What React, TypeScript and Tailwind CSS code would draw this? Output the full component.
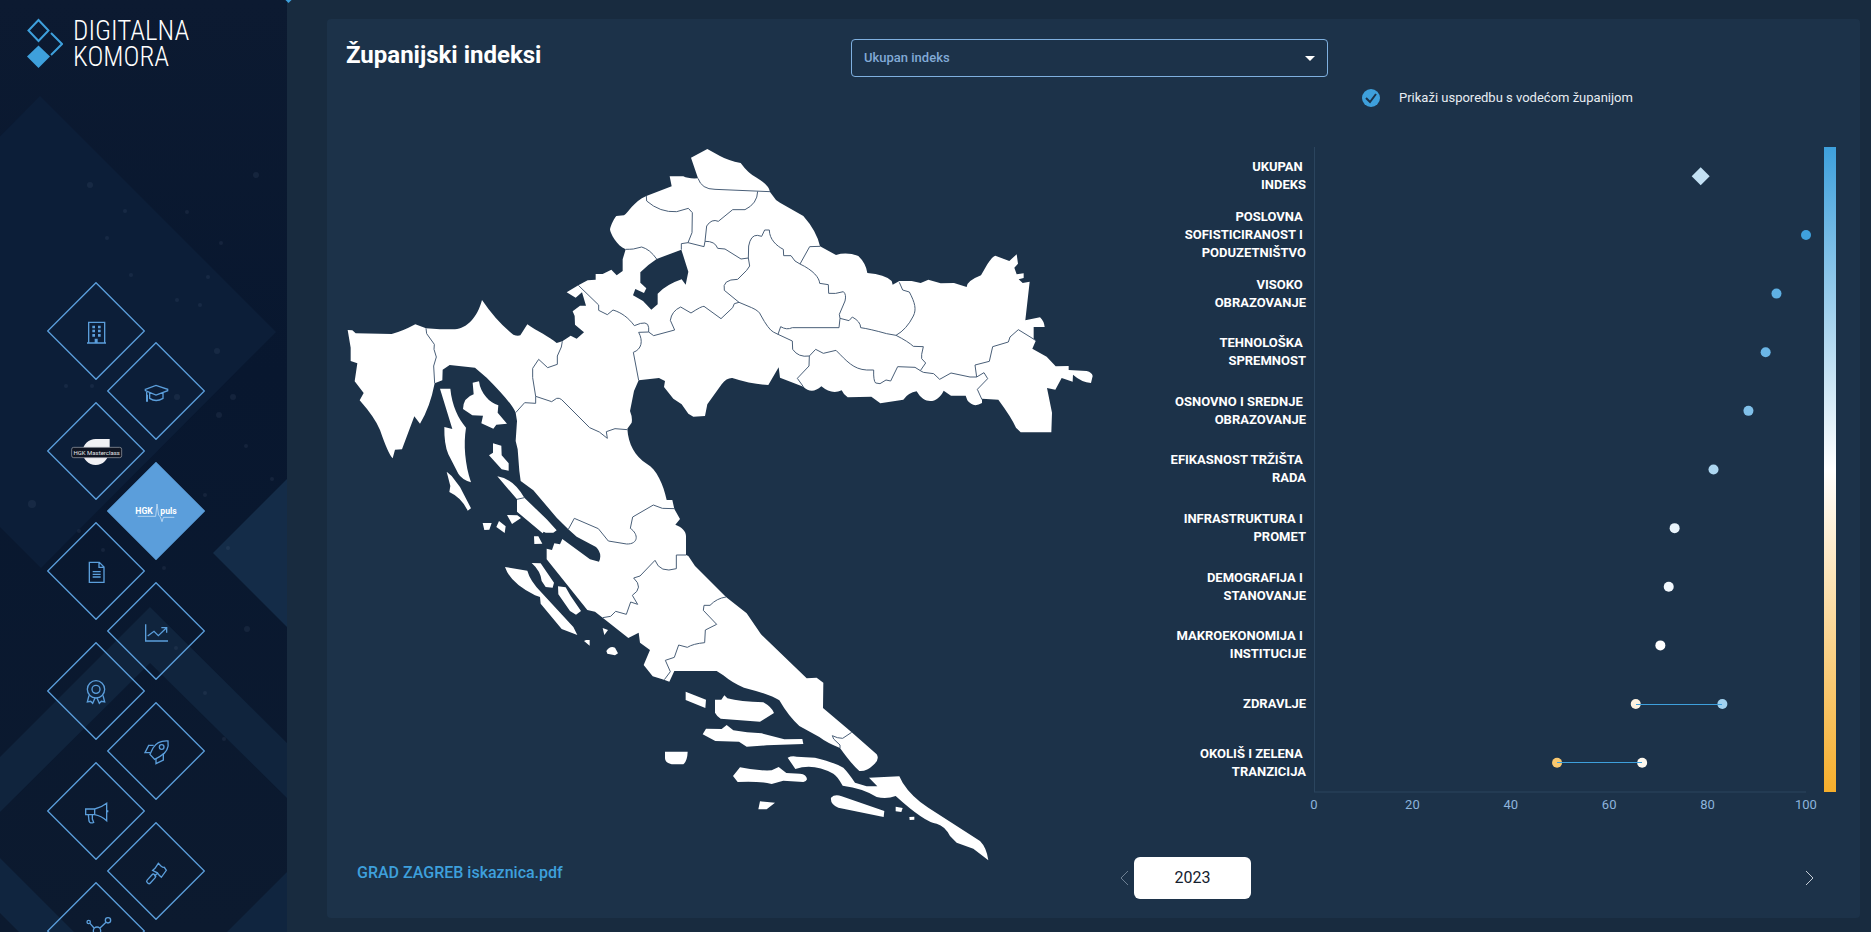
import React from "react";

type Row = {
  label: string[];
  value: number;
  color: string;
  lead?: number;
  leadColor?: string;
};

const rows: Row[] = [
  { label: ["UKUPAN", "INDEKS"], value: 78.6, color: "#c3e1f4" },
  { label: ["POSLOVNA", "SOFISTICIRANOST I", "PODUZETNIŠTVO"], value: 100, color: "#3fa1de" },
  { label: ["VISOKO", "OBRAZOVANJE"], value: 94, color: "#5fb0e3" },
  { label: ["TEHNOLOŠKA", "SPREMNOST"], value: 91.8, color: "#6bb6e6" },
  { label: ["OSNOVNO I SREDNJE", "OBRAZOVANJE"], value: 88.3, color: "#80c0e9" },
  { label: ["EFIKASNOST TRŽIŠTA", "RADA"], value: 81.2, color: "#add7f1" },
  { label: ["INFRASTRUKTURA I", "PROMET"], value: 73.3, color: "#e9f4fb" },
  { label: ["DEMOGRAFIJA I", "STANOVANJE"], value: 72.1, color: "#f2f8fd" },
  { label: ["MAKROEKONOMIJA I", "INSTITUCIJE"], value: 70.4, color: "#ffffff" },
  { label: ["ZDRAVLJE"], value: 65.4, color: "#fdf2e0", lead: 83, leadColor: "#a2d2ef" },
  { label: ["OKOLIŠ I ZELENA", "TRANZICIJA"], value: 49.4, color: "#f9c86f", lead: 66.7, leadColor: "#fef8ee" },
];

const ticks = [0, 20, 40, 60, 80, 100];

const stars = [
  [90, 185, 3], [125, 211, 2], [187, 212, 2], [107, 238, 2], [256, 175, 3], [221, 243, 2], [131, 275, 2],
  [208, 277, 2], [177, 300, 2], [200, 305, 2], [217, 351, 3], [66, 386, 2], [92, 386, 2], [177, 397, 3],
  [233, 397, 3], [219, 415, 3], [246, 446, 2], [32, 504, 4], [272, 479, 2], [205, 495, 2], [79, 531, 2],
  [228, 548, 2], [103, 550, 2], [164, 568, 2], [247, 629, 3], [176, 648, 2], [205, 693, 2], [224, 739, 2],
];

/* Sidebar icons share the 294 unit box of the diamond they sit in */
const icons: { name: string; art: React.ReactNode; active?: boolean }[] = [
  {
    name: "Tvrtke",
    art: (
      <>
        <path d="M125 183V121H173V183M120 183H177" />
        <path
          d="M136 131h8v8h-8zM153 131h8v8h-8zM136 143h8v8h-8zM153 143h8v8h-8zM136 156h8v8h-8zM153 156h8v8h-8zM143 170h9v13h-9z"
          fill="#5b9edb"
          stroke="none"
        />
      </>
    ),
  },
  {
    name: "Edukacija",
    art: (
      <path d="M115 142L147 130L182 142V146L147 159L115 146ZM128 151V169Q147 182 168 169V151M119 150V179M121 158V179" />
    ),
  },
  {
    name: "HGK Masterclass",
    art: (
      <>
        <path d="M188 111H147A39 39 0 1 0 185 150Q188 145 188 135Z" fill="#f1f1f4" stroke="none" />
        <rect x="74" y="136" width="150" height="31" rx="6" fill="#101522" stroke="#a5a9b1" strokeWidth="2" />
        <text x="149" y="158" textAnchor="middle" fontSize="18" fill="#e4e6ea" stroke="none">
          HGK Masterclass
        </text>
      </>
    ),
  },
  {
    name: "HGK puls",
    active: true,
    art: (
      <>
        <g fill="#ffffff" stroke="none" fontSize="26" fontWeight="700">
          <text x="85" y="156">HGK</text>
          <text x="160" y="156">puls</text>
        </g>
        <path d="M92 163H146L150 126L155 160L160 164L165 179L169 166H202" stroke="#e3effa" strokeWidth="2" />
      </>
    ),
  },
  {
    name: "Dokumenti",
    art: <path d="M127 121H157L171 135V181H127ZM156 121V136H171M137 149H161M137 157H161M137 165H161" />,
  },
  {
    name: "Statistika",
    art: <path d="M116 127V177H183M122 162L141 148L154 161L178 138M163 137H179V152" />,
  },
  {
    name: "Certifikati",
    art: (
      <>
        <circle cx="147" cy="142" r="26" />
        <circle cx="147" cy="142" r="12" />
        <path d="M126 160L121 180L131 178L137 184L144 168M168 160L173 180L163 178L157 184L150 168" />
      </>
    ),
  },
  {
    name: "Startup",
    art: (
      <>
        <path d="M183 117Q152 115 138 138L129 157L143 172L158 164Q188 148 183 117Z" />
        <circle cx="164" cy="135" r="7" />
        <path d="M140 130H125L114 152H129M147 170V185L169 174V154" />
      </>
    ),
  },
  {
    name: "Promocija",
    art: (
      <path d="M116 141H143V158H116ZM143 141Q163 137 179 124V176Q163 162 143 158M182 145V151M124 158L126 177Q129 186 140 181L136 171V158" />
    ),
  },
  {
    name: "Natječaji",
    art: (
      <>
        <path d="M154 124L161 131Q168 137 172 136L178 145L163 166L156 159Q152 151 146 150L137 145L144 139ZM151 154L142 163" />
        <rect x="117" y="164" width="32" height="13" rx="5" transform="rotate(-48 133 171)" />
      </>
    ),
  },
  {
    name: "Mreža",
    art: (
      <>
        <circle cx="125" cy="120" r="5" />
        <circle cx="183" cy="115" r="8" />
        <circle cx="150" cy="146" r="11" />
        <circle cx="121" cy="176" r="7" />
        <circle cx="176" cy="178" r="6" />
        <path d="M129 124L141 138M177 121L159 138M142 154L126 170M158 154L171 173" />
      </>
    ),
  },
];

const Sidebar = () => (
  <aside className="relative w-[287px] shrink-0 overflow-hidden bg-linear-to-b from-[#0c1a31] via-[#08172f] via-40% to-[#0c1a2f]">
    <svg className="absolute inset-0" width="287" height="1200" aria-hidden="true">
      <path d="M40 96L276 332L41 568L-195 332Z" fill="#0c1e38" />
      <path d="M213 553L287 479V627Z" fill="#142c48" />
      <path d="M150 607L287 743V798L150 663L0 812V757Z" fill="#10243d" />
      <path d="M0 858L150 1008V1063L0 913ZM287 872L137 1022H287Z" fill="#10253f" />
      {stars.map(([x, y, r]) => (
        <circle key={`${x}-${y}`} cx={x} cy={y} r={r} fill="#7c97b3" opacity="0.1" />
      ))}
    </svg>

    <a href="#" className="relative flex h-[282px] items-start gap-[10px] pt-[18px] pl-[27px]">
      <svg width="36" height="52" viewBox="0 0 36 52" fill="none" stroke="#3ea0dc" strokeWidth="2" aria-hidden="true">
        <path d="M11.500 2L21.500 12.500L11.500 23L1.500 12.500Z" />
        <path d="M24 15L35 26L24 37" />
        <path d="M11.500 27.500L23 38.500L11.500 50L0 38.500Z" fill="#3ea0dc" stroke="none" />
      </svg>
      <span className="font-['Roboto_Condensed','Liberation_Sans_Narrow',Roboto,sans-serif] text-[27px] leading-[26px] font-light text-white">
        DIGITALNA
        <br />
        KOMORA
      </span>
    </a>

    <nav className="relative flex flex-col">
      {icons.map((icon, i) => (
        <a
          key={icon.name}
          href="#"
          aria-label={icon.name}
          className={i % 2 ? "-mb-[38px] ml-[107px] w-[98px]" : "-mb-[38px] ml-[47px] w-[98px]"}
        >
          <svg className="block" width="98" height="98" viewBox="0 0 294 294" fill="none" stroke="#5b9edb" strokeWidth="4">
            <path d="M147 2L292 147L147 292L2 147Z" fill={icon.active ? "#5b9edb" : "none"} />
            {icon.art}
          </svg>
        </a>
      ))}
    </nav>
  </aside>
);

const CroatiaMap = () => (
  <svg className="block h-auto w-full" viewBox="60 30 2280 2160" role="img" aria-label="Karta županija">
    <g fill="#ffffff">
      {/* mainland, with Grad Zagreb left open */}
      <path
        fillRule="evenodd"
        d="M83 597L97 598L107 607L215 609Q245 602 286 580L318 592L360 595H405C440 592 472 560 486 507Q530 572 580 611Q592 616 601 613L622 580C650 600 690 618 710 636L727 631L752 614L770 623L792 604L765 581L764 555L758 541L780 524H798L786 484L767 500L740 484L775 463L803 448L827 446V429H848L874 416L890 433L908 420V385L917 355C890 345 870 305 870 295C872 283 885 258 889 255L912 253C925 245 940 212 979 195L1055 166L1049 136H1090Q1105 144 1134 142L1113 80L1162 54L1200 75Q1225 89 1262 96Q1285 128 1310 140Q1348 163 1350 183L1368 207L1380 215L1450 255Q1490 300 1500 346L1548 372Q1580 362 1615 375Q1638 397 1642 426Q1695 430 1715 450L1718 461L1738 450H1775L1802 456L1825 446L1862 457L1902 456L1940 468Q1940 450 1983 433L2002 400Q2018 375 2026 374L2068 390L2090 370L2094 398L2083 410L2090 430L2111 427V441L2096 445L2108 456L2129 452L2116 568L2160 559Q2172 570 2174 588H2141V625L2147 630L2137 653L2180 677L2207 706L2246 705V717L2300 720Q2316 724 2318 735L2313 756Q2285 754 2259 731L2258 752L2225 741L2206 776L2181 771L2196 845L2194 904H2102L2088 890Q2075 860 2035 806L1986 803V816Q1960 832 1942 808L1937 794H1893L1871 779C1855 815 1815 825 1790 781Q1765 785 1750 806L1681 817L1654 797L1583 799Q1570 790 1565 778Q1535 792 1504 766Q1475 792 1450 767L1380 740L1376 709L1345 762Q1295 760 1237 741Q1220 740 1205 760L1162 820L1155 855L1120 857L1105 848L1085 820L1060 803L1032 768L1035 750L1017 741L956 748L942 780L930 840Q938 860 935 875L922 893C925 940 945 975 980 998C1010 1015 1030 1060 1040 1107H1057L1063 1134L1080 1164L1066 1181C1085 1188 1098 1200 1098 1215V1272L1105 1275L1125 1305L1218 1398L1280 1447L1323 1510L1460 1642L1490 1640L1510 1655L1509 1731L1595 1804L1670 1870Q1680 1885 1660 1902Q1640 1922 1618 1920Q1595 1900 1560 1851Q1520 1835 1498 1818L1438 1785Q1405 1755 1378 1708Q1350 1690 1272 1670Q1240 1658 1210 1633L1190 1620H1063L1048 1652L1032 1646L998 1636L971 1602L990 1557L960 1535L956 1505L925 1521L848 1460L825 1442L802 1437L680 1285V1253L696 1257L703 1237L720 1240L727 1224L810 1285L837 1292Q848 1268 828 1248L770 1217L745 1195L710 1160L640 1078L602 1050L598 1020L593 955L587 930L591 870L587 845Q575 815 500 740L465 710L389 702L368 716L367 748L344 757Q330 830 300 878L283 856L246 955L225 956L218 982Q205 970 180 897Q165 860 119 808L131 786L104 751L112 697L92 690V650ZM961 424Q985 400 1010 384L1084 356L1105 422L1097 461L1085 445Q1040 460 1013 488V520L994 536L969 510L939 493L946 474L972 486L979 472L961 455Z"
      />
      {/* Cres, Krk, Rab */}
      <path d="M360 773H391C396 825 415 862 438 890C430 940 435 1000 453 1054Q425 1045 415 1028L385 970Q372 940 373 888L397 894ZM458 755L477 751C482 790 510 815 535 823L533 845L561 878L529 881L520 893L484 877L489 854L457 853L429 834Q430 800 461 790ZM519 937L544 944L545 973L566 997V1019L545 1015L507 973L519 965Z" />
      <g transform="translate(180 750)">
        <path d="M200 272L215 285L240 318L273 382L263 389Q245 350 208 333L211 315ZM352 286Q400 292 433 350L500 415L530 448L520 455H497L491 452L488 457L411 392V355Z" />
        <path d="M308 426H335L328 446L313 447ZM357 420L377 436L374 456L349 438ZM381 402L412 403L423 411L396 429ZM462 466H475L487 488L463 489Z" />
        <path d="M375 558L442 569Q450 600 485 635L580 738L592 762L545 744L482 668L480 648L465 643Q390 605 375 558ZM455 546L482 547L522 605L518 620L497 618L485 600Q482 570 455 546ZM534 616L557 619L572 645L603 690L588 701L570 690L535 640Z" />
        <path d="M668 741L684 747L673 762ZM612 780L618 777H629V794ZM679 810Q690 793 705 800L714 817L705 823L682 818Z" />
      </g>
      <g transform="translate(840 990)">
        <path d="M257 692L318 716L316 741L257 717ZM345 716H364L373 703L382 712Q420 722 490 724Q515 738 522 756L480 782L362 773Q350 765 345 755ZM308 820L318 803L365 804L380 792L400 808Q440 815 485 817L553 835L607 834L610 849L500 853L440 857L417 842L346 840ZM195 872H263Q262 900 250 910H215Q195 905 195 892Z" />
        <path d="M399 945L420 919Q470 930 515 928L536 918L559 936L600 938Q620 940 621 955Q618 963 610 963L550 959L515 969Q480 960 413 963Z" />
        <path d="M563 890Q575 884 590 887L645 890Q700 903 730 920Q745 935 765 965L800 976H832L807 950L898 946L908 965Q935 1008 985 1040L1140 1140Q1160 1160 1165 1198L1120 1163L1070 1145L1050 1125Q1035 1095 1010 1088Q975 1085 887 1005Q860 1015 830 1008Q790 982 728 974Q712 945 700 938Q640 905 586 924Z" />
        <path d="M693 1010Q705 998 725 1006L853 1050L851 1068L715 1040Q690 1030 693 1010ZM480 1021L525 1025L500 1045H475ZM887 1037L908 1041L904 1053L887 1051ZM928 1068L943 1067V1076L929 1077Z" />
      </g>
    </g>
    <g fill="none" stroke="#4a5f78" strokeWidth="3" strokeLinejoin="round">
      <path d="M318 592L320 608L343 640L342 655L349 678L341 705L344 757M727 631L724 648L712 675V700L683 710L656 685L638 712V740L647 796V817L614 815L587 845" />
      <path d="M647 796L695 812L710 802Q718 800 725 806L809 890L838 903L862 922L859 902L885 893L922 896" />
      <path d="M775 463L836 522V538L862 551L879 537C905 545 925 560 943 584Q985 565 986 590V603L956 604C970 630 965 655 940 664L956 748M986 603L1001 614L1064 597L1051 568Q1055 540 1082 528L1113 546Q1145 525 1152 526L1203 563L1238 530L1243 518L1257 514" />
      <path d="M917 355Q930 355 940 354L965 348Q990 355 1010 384M979 195L980 210Q1020 245 1070 242L1105 232L1117 245L1116 305L1104 335L1084 338V356M1104 335L1152 347L1155 331L1160 285Q1175 262 1195 271L1238 236H1275Q1312 218 1313 181M1134 142Q1145 175 1185 175L1350 182" />
      <path d="M1155 331Q1185 330 1193 352L1215 354L1263 384L1285 381L1286 345Q1292 312 1312 313L1325 316L1334 297H1348C1348 325 1370 345 1390 355L1391 374H1413L1425 390L1440 399L1469 347L1500 346" />
      <path d="M1285 381L1289 405L1280 418L1253 445Q1205 445 1213 478L1257 514L1295 530Q1318 540 1322 552Q1345 595 1360 603L1374 610L1417 630L1418 655Q1435 680 1468 675L1487 655L1510 667L1548 658C1580 690 1600 715 1640 717H1661Q1660 750 1667 756L1680 758L1698 747L1712 750L1733 707L1785 709L1801 719L1817 696L1805 683V670L1810 647L1780 646Q1765 632 1728 613L1700 608Q1650 594 1622 590Q1622 572 1597 558L1587 569L1560 562L1557 590H1417Q1400 598 1382 587L1374 610" />
      <path d="M1440 399C1480 418 1498 440 1499 457L1525 461L1526 487Q1545 490 1570 482Q1580 490 1575 510L1558 550L1560 562M1738 454L1748 477L1768 483C1785 515 1790 535 1780 555Q1760 595 1728 613M1468 675L1467 705L1432 742L1450 767" />
      <path d="M1801 719L1810 724L1841 728L1859 745L1893 726L1950 738H1970L1992 725L2003 743L1972 775L1986 806M1970 738L1965 702L2008 691L2018 647L2065 633L2070 618L2095 596L2147 628" />
      <path d="M745 1195L763 1162L835 1193L865 1230L920 1239C955 1240 957 1210 931 1192L938 1158L1000 1122L1027 1132L1063 1133M1098 1272H1069V1313Q1020 1328 1005 1288L960 1335L941 1341Q972 1370 937 1393L953 1420L932 1413L919 1450L887 1441L872 1456L848 1460M591 1105L613 1100" />
      <path d="M1218 1398Q1190 1402 1170 1423H1152L1150 1438L1190 1480L1156 1497L1154 1535Q1120 1538 1102 1549L1076 1542L1063 1579L1036 1588L1051 1622L1033 1646M1595 1804L1568 1822L1552 1820L1537 1814L1541 1824L1560 1842V1851" />
    </g>
  </svg>
);

const Plot = () => (
  <svg className="block h-full w-full overflow-visible" role="img" aria-label="Vrijednosti indeksa">
    <path d="M0.500 0V645" stroke="#2b455e" />
    <line x1="0" y1="100%" x2="100%" y2="100%" stroke="#2b455e" />
    {rows.map((row, i) => {
      const y = `${((i + 0.5) / rows.length) * 100}%`;
      const x = `${row.value}%`;
      if (i === 0)
        return (
          <svg key={i} x={x} y={y} className="overflow-visible">
            <path d="M0 -9L9 0L0 9L-9 0Z" fill={row.color} />
          </svg>
        );
      return (
        <g key={i}>
          <circle cx={x} cy={y} r="5" fill={row.color} />
          {row.lead && (
            <>
              <circle cx={`${row.lead}%`} cy={y} r="5" fill={row.leadColor} />
              <line x1={x} y1={y} x2={`${row.lead}%`} y2={y} stroke="#3ea0dc" shapeRendering="crispEdges" />
            </>
          )}
        </g>
      );
    })}
  </svg>
);

const IndexChart = () => (
  <div className="flex pt-[6px] pr-6">
    <div className="grid h-[645px] w-[172px] shrink-0 grid-rows-11 text-right text-[13px] leading-[18px] font-bold">
      {rows.map((row) => (
        <div key={row.label[0]} className="flex flex-col justify-center whitespace-pre">
          {row.label.map((line, i) => (
            <span key={line}>{i < row.label.length - 1 ? `${line} ` : line}</span>
          ))}
        </div>
      ))}
    </div>
    <div className="ml-2 flex-1">
      <div className="h-[645px]">
        <Plot />
      </div>
      <div className="mt-1 flex justify-between text-[13px] leading-[18px] text-[#8db4dc]">
        {ticks.map((tick) => (
          <span key={tick} className="flex w-0 justify-center">
            {tick}
          </span>
        ))}
      </div>
    </div>
    <div className="ml-[18px] h-[645px] w-3 bg-linear-to-b/srgb from-[#3ea0dc] via-white to-[#f6ae2b]" />
  </div>
);

export default function App() {
  return (
    <div className="flex h-screen overflow-hidden bg-[#182b3f] font-[Roboto,'Liberation_Sans',sans-serif] text-white">
      <Sidebar />
      <main className="relative min-w-0 flex-1 pt-[19px] pr-[11px] pb-[14px] pl-10">
        <span className="absolute -top-[3px] -left-px size-[5px] rotate-45 bg-[#3ea0dc]" />
        <section className="flex h-full flex-col rounded bg-[#1c3249]">
          <header className="grid grid-cols-[524fr_477fr_532fr] pt-5">
            <h1 className="pl-[19px] text-2xl font-bold">Županijski indeksi</h1>
            <div className="relative h-[38px]">
              <select
                aria-label="Indeks"
                className="h-full w-full appearance-none rounded border border-[#7fb0df] px-3 text-[13px] font-medium text-[#82aad6]"
              >
                <option>Ukupan indeks</option>
              </select>
              <svg className="pointer-events-none absolute top-[17px] right-[13px]" width="10" height="5" aria-hidden="true">
                <path d="M0 0H10L5 5Z" fill="#ffffff" />
              </svg>
            </div>
            <label className="flex items-center gap-[19px] pt-[50px] pl-[34px] text-[13px] leading-[18px] text-[#e8edf2]">
              <span className="relative size-[18px]">
                <input type="checkbox" defaultChecked className="block size-[18px] appearance-none rounded-full bg-[#3ea0dc]" />
                <svg className="pointer-events-none absolute inset-0" width="18" height="18" fill="none" stroke="#1c3249" strokeWidth="2" aria-hidden="true">
                  <path d="M4 9L8 13L14 5" />
                </svg>
              </span>
              Prikaži usporedbu s vodećom županijom
            </label>
          </header>

          <div className="mt-[34px] grid grid-cols-[807fr_726fr]">
            <div className="pl-[13px]">
              <div className="pr-[34px]">
                <CroatiaMap />
              </div>
              <a href="#" className="ml-[17px] inline-block text-base leading-6 font-medium text-[#3ea0dc]">
                GRAD ZAGREB iskaznica.pdf
              </a>
            </div>
            <div>
              <IndexChart />
              <div className="mt-[43px] flex items-center pr-[46px]">
                <button type="button" aria-label="Prethodna godina" disabled className="-ml-[14px] pr-[5px] text-[#6d8093]">
                  <svg width="9" height="16" fill="none" stroke="currentColor" aria-hidden="true">
                    <path d="M8 1L1 8L8 15" />
                  </svg>
                </button>
                <button type="button" className="h-[42px] w-[117px] rounded-md bg-white text-base text-[#14202e]">
                  2023
                </button>
                <button type="button" aria-label="Sljedeća godina" className="ml-auto text-[#c4ccd5]">
                  <svg width="9" height="16" fill="none" stroke="currentColor" aria-hidden="true">
                    <path d="M1 1L8 8L1 15" />
                  </svg>
                </button>
              </div>
            </div>
          </div>
        </section>
      </main>
    </div>
  );
}
